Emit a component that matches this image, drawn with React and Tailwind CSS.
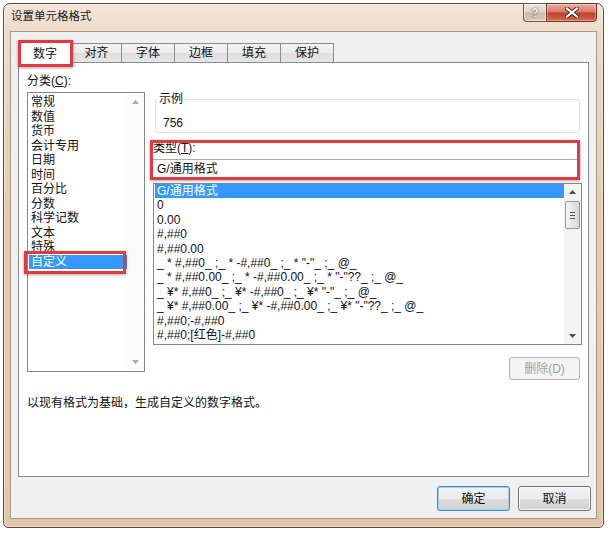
import React from "react";

const CATEGORIES = ["常规", "数值", "货币", "会计专用", "日期", "时间", "百分比", "分数", "科学记数", "文本", "特殊", "自定义"];

const TYPES = [
  "G/通用格式",
  "0",
  "0.00",
  "#,##0",
  "#,##0.00",
  '_ * #,##0_ ;_ * -#,##0_ ;_ * "-"_ ;_ @_',
  '_ * #,##0.00_ ;_ * -#,##0.00_ ;_ * "-"??_ ;_ @_',
  '_ ¥* #,##0_ ;_ ¥* -#,##0_ ;_ ¥* "-"_ ;_ @_',
  '_ ¥* #,##0.00_ ;_ ¥* -#,##0.00_ ;_ ¥* "-"??_ ;_ @_',
  "#,##0;-#,##0",
  "#,##0;[红色]-#,##0",
];

const TABS = ["对齐", "字体", "边框", "填充", "保护"];

function Arrow({ down, color = "#4d4d4d" }) {
  return (
    <svg width="7" height="4" viewBox="0 0 7 4">
      {down ? <path d="M0 0 H7 L3.5 4 Z" fill={color} /> : <path d="M0 4 H7 L3.5 0 Z" fill={color} />}
    </svg>
  );
}

function RedBox({ className }) {
  return (
    <div
      className={
        "pointer-events-none absolute border-[3px] border-[#e23a40] shadow-[0_1px_3px_rgba(0,0,0,0.35)] " + className
      }
    />
  );
}

export default function App() {
  return (
    <div
      className="w-[614px] h-[535px] bg-white pt-[3px] pl-[3px] text-[12px] text-[#111]"
      style={{ fontFamily: '"Liberation Sans", "Noto Sans CJK SC", sans-serif' }}
    >
      {/* window frame */}
      <div className="w-[601px] h-[525px] flex flex-col px-[6px] rounded-t-[7px] rounded-b-[5px] border border-[#5b4a3d] bg-[linear-gradient(180deg,#f4e6da_0%,#eed9c7_6%,#e6cbb3_40%,#e3c5ab_100%)] shadow-[inset_0_0_0_1px_rgba(255,255,255,0.45)]">
        {/* title bar */}
        <div className="h-[27px] flex justify-between">
          <div className="self-center pl-[1px] pb-[1px] text-[11.5px] text-[#1a1a1a]">设置单元格格式</div>
          <div className="flex self-start -mt-[1px] mr-[0px]">
            <div className="w-[23px] h-[19px] flex items-center justify-center border border-[#6a5a4c] border-r-0 rounded-bl-[4px] bg-[linear-gradient(180deg,#efe4da_0%,#e2d3c6_45%,#cdbbab_55%,#d9c8b9_100%)] shadow-[inset_0_0_0_1px_rgba(255,255,255,0.5)]">
              <span className="text-[12px] font-bold text-white [text-shadow:0_0_1px_#333,0_0_1px_#333]">?</span>
            </div>
            <div className="w-[51px] h-[19px] flex items-center justify-center border border-[#6b3428] rounded-br-[4px] bg-[linear-gradient(180deg,#eab0a2_0%,#d9786a_45%,#c2422a_55%,#d26a4f_100%)] shadow-[inset_0_0_0_1px_rgba(255,255,255,0.35)]">
              <svg width="14" height="11" viewBox="0 0 14 11">
                <path d="M2 1.5 L12 9.5 M12 1.5 L2 9.5" stroke="#4a2018" strokeWidth="4" strokeLinecap="square" />
                <path d="M2 1.5 L12 9.5 M12 1.5 L2 9.5" stroke="#ffffff" strokeWidth="2.2" strokeLinecap="square" />
              </svg>
            </div>
          </div>
        </div>

        {/* client area */}
        <div className="w-[587px] h-[488px] flex flex-col bg-[#f0f0f0] border border-[#a99584] pl-[7px]">
          {/* tabs */}
          <div className="relative z-10 flex items-end h-[22px] mt-[9px] -mb-[1px]">
            <div className="relative w-[54px] h-[22px] flex items-start justify-center pt-[3px] bg-white border border-b-0 border-[#898c95] rounded-t-[2px]">
              数字
              <RedBox className="-left-[1px] -top-[2px] w-[55px] h-[27px]" />
            </div>
            {TABS.map((t, i) => (
              <div
                key={t}
                className={
                  "h-[19px] mb-[1px] flex items-center justify-center border border-b-0 border-[#898c95] bg-[linear-gradient(180deg,#f3f3f3_0%,#ebebeb_50%,#dedede_51%,#e6e6e6_100%)] " +
                  (i === 0 ? "w-[50px] border-l-0" : "w-[53px] border-l-0")
                }
              >
                {t}
              </div>
            ))}
          </div>

          {/* tab panel */}
          <div className="w-[571px] h-[415px] bg-white border border-[#898c95] flex flex-col pl-[8px]">
            <div className="mt-[11px] leading-[14px]">分类(<span className="underline">C</span>):</div>
            <div className="flex items-start mt-[4px]">
              {/* category list */}
              <div className="w-[118px] h-[280px] border border-[#828790] flex">
                <div className="flex-1 pt-[2px] pl-[1px]">
                  {CATEGORIES.map((c) => (
                    <div
                      key={c}
                      className={
                        "relative h-[14.5px] leading-[14.5px] pl-[2px] " +
                        (c === "自定义" ? "bg-[#3399ff] text-white" : "")
                      }
                    >
                      {c}
                      {c === "自定义" && <RedBox className="-left-[5px] -top-[4px] w-[102px] h-[23px]" />}
                    </div>
                  ))}
                </div>
                <div className="w-[17px] flex flex-col justify-between items-center py-[7px] bg-[#fbfbfb]">
                  <Arrow color="#a8a8a8" />
                  <Arrow down color="#a8a8a8" />
                </div>
              </div>

              {/* right column */}
              <div className="ml-[7px] w-[430px] flex flex-col">
                {/* sample group */}
                <div className="relative mt-[7px] ml-[3px] w-[425px] h-[34px] border border-[#d5dfe5] rounded-[3px] pl-[7px] pt-[16px] leading-[14px]">
                  <span className="absolute -top-[8px] left-[2px] bg-white px-[1px] leading-[14px]">示例</span>
                  756
                </div>

                {/* type input */}
                <div className="relative mt-[7px] -ml-[2px] w-[430px] h-[40px] flex flex-col">
                  <div className="pl-[3px] pt-[1px] leading-[14px]">类型(<span className="underline">T</span>):</div>
                  <div className="mt-[4px] h-[20px] border border-[#abadb3] flex items-center pl-[6px] bg-white">G/通用格式</div>
                  <RedBox className="inset-0" />
                </div>

                {/* type list */}
                <div className="mt-[3px] ml-[1px] w-[429px] h-[162px] border border-[#828790] flex">
                  <div className="flex-1 pl-[1px]">
                    {TYPES.map((t, i) => (
                      <div
                        key={i}
                        className={
                          "h-[14.4px] leading-[14.4px] pl-[2px] whitespace-pre " +
                          (i === 0 ? "bg-[#3399ff] text-white" : "")
                        }
                      >
                        {t}
                      </div>
                    ))}
                  </div>
                  <div className="w-[17px] flex flex-col items-center bg-[#f4f4f4]">
                    <div className="h-[16px] flex items-center">
                      <Arrow />
                    </div>
                    <div className="w-[15px] h-[28px] mt-[1px] rounded-[2px] border border-[#979797] bg-[linear-gradient(90deg,#f6f6f6,#e6e6e6_50%,#d8d8d8)] flex flex-col items-center justify-center gap-[2px]">
                      <div className="w-[5px] h-px bg-[#555]" />
                      <div className="w-[5px] h-px bg-[#555]" />
                      <div className="w-[5px] h-px bg-[#555]" />
                    </div>
                    <div className="flex-1" />
                    <div className="h-[16px] flex items-center">
                      <Arrow down />
                    </div>
                  </div>
                </div>

                <div className="flex justify-end mt-[12px] pr-[2px]">
                  <div className="w-[71px] h-[23px] flex items-center justify-center rounded-[3px] border border-[#adb2b5] bg-[#f4f4f4] text-[#a0a0a0]">
                    删除(D)
                  </div>
                </div>
              </div>
            </div>
            <div className="mt-[16px] leading-[14px]">以现有格式为基础，生成自定义的数字格式。</div>
          </div>

          {/* buttons */}
          <div className="w-[573px] flex justify-end gap-[8px] mt-[9px]">
            <div className="w-[73px] h-[25px] flex items-center justify-center rounded-[3px] border border-[#3c8bc4] bg-[linear-gradient(180deg,#f2f2f2_0%,#ebebeb_50%,#dddddd_51%,#cfcfcf_100%)] shadow-[inset_0_0_0_1px_#9fd3ef]">
              确定
            </div>
            <div className="w-[73px] h-[25px] flex items-center justify-center rounded-[3px] border border-[#707070] bg-[linear-gradient(180deg,#f2f2f2_0%,#ebebeb_50%,#dddddd_51%,#cfcfcf_100%)] shadow-[inset_0_0_0_1px_#fcfcfc]">
              取消
            </div>
          </div>
        </div>
      </div>
    </div>
  );
}
